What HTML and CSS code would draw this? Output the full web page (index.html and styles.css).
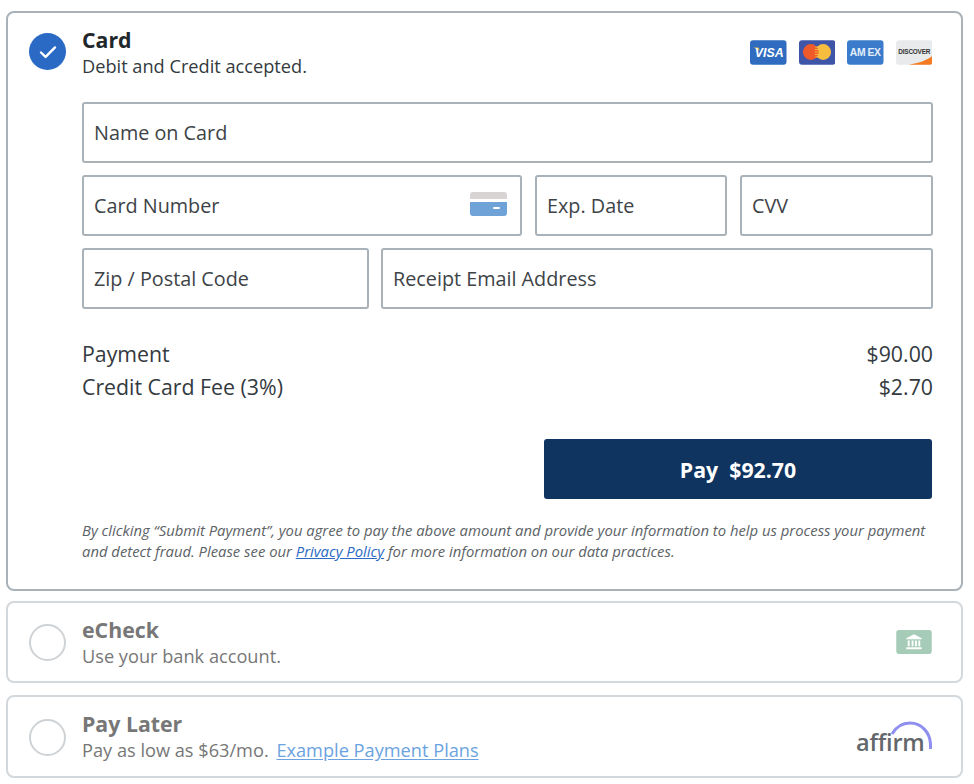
FILE: index.html
```html
<!DOCTYPE html>
<html lang="en">

<head>
  <meta charset="UTF-8">
  <title>Payment</title>
  <link rel="stylesheet" href="styles.css">
</head>

<body>
  <form class="methods">
    <section class="method active card-method">
      <div class="method-head">
        <span class="radio checked">
          <svg width="18" height="14" viewBox="0 0 18 14"><path d="M2 7.500l4.600 4.400L16 2.400" fill="none" stroke="#fff" stroke-width="2.400" stroke-linecap="round" stroke-linejoin="round"/></svg>
        </span>
        <div class="method-text">
          <h2>Card</h2>
          <p>Debit and Credit accepted.</p>
        </div>
        <div class="brands">
          <svg class="brand" width="36.500" height="25" viewBox="0 0 37 25">
            <rect width="37" height="25" rx="3" fill="#2f6cc0"/>
            <path d="M3.500 7.500h5l1.500 3z" fill="#f0b93a"/>
            <text x="19.500" y="17" class="brand-visa">VISA</text>
          </svg>
          <svg class="brand" width="36.500" height="25" viewBox="0 0 37 25">
            <rect width="37" height="25" rx="3" fill="#3f55a8"/>
            <circle cx="24.500" cy="12" r="8" fill="#f7bd3f"/>
            <circle cx="12" cy="12" r="8" fill="#ef5a2a"/>
            <path d="M16.500 7h4M16 9.500h4M16 12h4M16 14.500h4M16.500 17h4" stroke="#f7bd3f" stroke-width="1"/>
          </svg>
          <svg class="brand" width="36.500" height="25" viewBox="0 0 37 25">
            <rect width="37" height="25" rx="3" fill="#3a7ccb"/>
            <text x="18.500" y="16" class="brand-amex">AM EX</text>
          </svg>
          <svg class="brand" width="36.500" height="25" viewBox="0 0 37 25">
            <rect width="37" height="25" rx="3" fill="#e8eaec"/>
            <path d="M13 25c10-1.500 19-5 24-9v6a3 3 0 0 1-3 3z" fill="#f47b20"/>
            <text x="18.500" y="14.500" class="brand-discover">DISCOVER</text>
          </svg>
        </div>
      </div>

      <div class="fields">
        <input class="field name" placeholder="Name on Card">
        <div class="field-wrap number">
          <input class="field" placeholder="Card Number">
          <svg class="card-icon" width="37" height="24" viewBox="0 0 37 24">
            <path d="M0 7V3a3 3 0 0 1 3-3h31a3 3 0 0 1 3 3v4z" fill="#d8d4d4"/>
            <path d="M0 10h37v11a3 3 0 0 1-3 3H3a3 3 0 0 1-3-3z" fill="#6fa3d8"/>
            <rect x="23" y="15" width="7" height="2" rx="1" fill="#fff"/>
          </svg>
        </div>
        <input class="field exp" placeholder="Exp. Date">
        <input class="field cvv" placeholder="CVV">
        <input class="field zip" placeholder="Zip / Postal Code">
        <input class="field email" placeholder="Receipt Email Address">
      </div>

      <div class="totals">
        <div class="total-row"><span>Payment</span><span>$90.00</span></div>
        <div class="total-row"><span>Credit Card Fee (3%)</span><span>$2.70</span></div>
      </div>

      <div class="pay-row">
        <button type="submit" class="pay-btn">Pay&nbsp; $92.70</button>
      </div>

      <p class="legal">By clicking “Submit Payment”, you agree to pay the above amount and provide your information to help us process your payment and detect fraud. Please see our <a href="#">Privacy Policy</a> for more information on our data practices.</p>
    </section>

    <section class="method">
      <div class="method-head">
        <span class="radio"></span>
        <div class="method-text">
          <h2>eCheck</h2>
          <p>Use your bank account.</p>
        </div>
        <svg class="bank-icon" width="36" height="24" viewBox="0 0 37 25">
          <rect width="37" height="25" rx="3" fill="#a6ccb8"/>
          <path d="M18.500 4.500l8 4v1.200h-16V8.500z" fill="#fff"/>
          <path d="M12 11h2v6h-2zM16 11h2v6h-2zM19.500 11h2v6h-2zM23 11h2v6h-2z" fill="#fff"/>
          <rect x="10.500" y="18" width="16" height="2" fill="#fff"/>
        </svg>
      </div>
    </section>

    <section class="method later">
      <div class="method-head">
        <span class="radio"></span>
        <div class="method-text">
          <h2>Pay Later</h2>
          <p>Pay as low as $63/mo. <a href="#">Example Payment Plans</a></p>
        </div>
        <div class="affirm">
          <svg width="50" height="36" viewBox="0 0 50 36">
            <path d="M10 16C14 9 21 5 28 5c12 0 20 10 20.500 21v5" fill="none" stroke="#8f8ff0" stroke-width="3"/>
          </svg>
          <span>affirm</span>
        </div>
      </div>
    </section>
  </form>
</body>

</html>
```

FILE: styles.css
```css
* {
  box-sizing: border-box;
}

body {
  margin: 0;
  padding: 11px 11px 0 6px;
  font-family: "Open Sans", "Liberation Sans", sans-serif;
  font-size: 19.800px;
  color: #333a40;
  background: #fff;
}

.methods {
  display: flex;
  flex-direction: column;
  gap: 10px;
}

.method {
  height: 82px;
  padding: 13px 29px 0 21px;
  border: 2px solid #d3d8dc;
  border-radius: 8px;
  color: #777;
}

.method.later {
  height: 83px;
  margin-top: 2px;
}

.method.later .radio {
  margin-top: 9px;
}

.method.active {
  height: 580px;
  border-color: #a9b2b8;
  color: #333a40;
}

.method-head {
  display: flex;
  align-items: flex-start;
  gap: 16px;
}

.radio {
  display: flex;
  flex: none;
  align-items: center;
  justify-content: center;
  width: 37px;
  height: 37px;
  margin-top: 8px;
  border: 2px solid #cfd3d6;
  border-radius: 50%;
}

.radio.checked {
  margin-top: 7px;
  border: none;
  background: #2a6ac4;
}

.method-text {
  flex: 1;
}

h2 {
  margin: 0;
  font-size: 21.300px;
  line-height: 27px;
  font-weight: 700;
}

.active h2 {
  color: #22272b;
}

.method-text p {
  margin: 0;
  font-size: 18.200px;
  line-height: 26px;
}

.method-text a {
  margin-left: 3px;
  color: #6ba3e0;
  text-decoration: underline;
  text-underline-offset: 2px;
}

.brands {
  display: flex;
  gap: 12px;
  margin-top: 14px;
}

.brand text {
  font-family: "Liberation Sans", sans-serif;
  text-anchor: middle;
  font-weight: 700;
}

.brand-visa {
  font-size: 12.500px;
  font-style: italic;
  fill: #fff;
}

.brand-amex {
  font-size: 10.500px;
  fill: #e4eefa;
  letter-spacing: -0.400px;
}

.brand-discover {
  font-size: 6.500px;
  fill: #333;
  letter-spacing: -0.200px;
}

.bank-icon {
  margin-top: 14px;
}

.affirm {
  position: relative;
  width: 76px;
  height: 46px;
  margin-top: 6px;
}

.affirm svg {
  position: absolute;
  top: 2px;
  right: 0;
}

.affirm span {
  position: absolute;
  bottom: 7px;
  left: 0;
  font-size: 23.500px;
  line-height: 26px;
  font-weight: 600;
  color: #63676b;
  letter-spacing: -0.200px;
}

.fields {
  display: grid;
  grid-template-columns: 287px 12px 141px 13px 192px 13px 193px;
  grid-auto-rows: 61px;
  row-gap: 12px;
  margin-top: 23px;
  margin-left: 53px;
  margin-right: -1px;
}

.field {
  width: 100%;
  height: 61px;
  padding: 0 10px;
  border: 2px solid #a9b2b8;
  border-radius: 3px;
  font: inherit;
  color: inherit;
  outline: none;
  background: #fff;
}

.field::placeholder {
  color: #3d4347;
  opacity: 1;
}

.name {
  grid-column: 1 / -1;
}

.field-wrap {
  position: relative;
}

.number {
  grid-column: 1 / 4;
}

.card-icon {
  position: absolute;
  top: 17px;
  right: 15px;
}

.exp {
  grid-column: 5;
}

.cvv {
  grid-column: 7;
}

.zip {
  grid-column: 1;
}

.email {
  grid-column: 3 / -1;
}

.totals {
  margin-top: 28px;
  margin-left: 53px;
  margin-right: -1px;
}

.total-row {
  display: flex;
  justify-content: space-between;
  font-size: 21.300px;
  line-height: 33px;
}

.pay-row {
  display: flex;
  justify-content: flex-end;
  margin-top: 36px;
}

.pay-btn {
  width: 388px;
  height: 60px;
  border: none;
  border-radius: 3px;
  background: #0f3460;
  color: #fff;
  font: inherit;
  font-size: 21.300px;
  font-weight: 700;
}

.legal {
  margin: 21px 0 0 53px;
  font-size: 14.830px;
  line-height: 21px;
  font-style: italic;
  color: #5c6266;
}

.legal a {
  color: #2a6ac4;
  text-decoration: underline;
}
```
